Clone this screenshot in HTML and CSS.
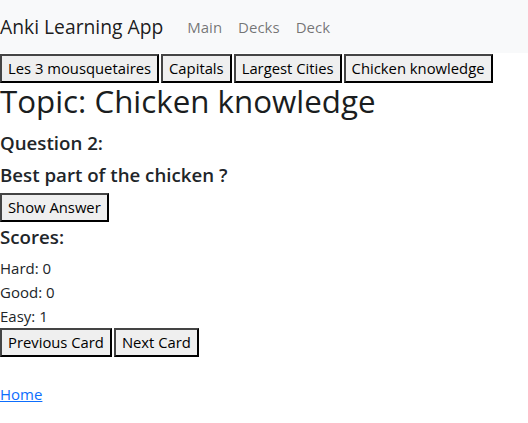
FILE: index.html
```html
<!DOCTYPE html>
<html lang="en">
<head>
<meta charset="utf-8">
<title>Anki Learning App</title>
<link rel="stylesheet" href="styles.css">
</head>
<body>
<nav class="navbar">
  <span class="brand">Anki Learning App</span>
  <ul class="nav-links">
    <li><a class="nav-link" href="#">Main</a></li>
    <li><a class="nav-link" href="#">Decks</a></li>
    <li><a class="nav-link" href="#">Deck</a></li>
  </ul>
</nav>
<div class="decks">
  <button class="btn">Les 3 mousquetaires</button>
  <button class="btn">Capitals</button>
  <button class="btn">Largest Cities</button>
  <button class="btn">Chicken knowledge</button>
</div>
<h1 class="topic">Topic: Chicken knowledge</h1>
<h5 class="sub q-num">Question 2:</h5>
<h5 class="sub q-text">Best part of the chicken ?</h5>
<div class="row"><button class="btn">Show Answer</button></div>
<h5 class="sub scores">Scores:</h5>
<p class="score">Hard: 0</p>
<p class="score">Good: 0</p>
<p class="score">Easy: 1</p>
<div class="row"><button class="btn">Previous Card</button><button class="btn">Next Card</button></div>
<a class="home" href="#">Home</a>
</body>
</html>
```
FILE: styles.css
```css
* { box-sizing: border-box; }
body {
  margin: 0;
  font-family: "Open Sans", "Noto Sans", sans-serif;
  font-size: 15px;
  line-height: 24px;
  color: #212529;
  background: #fff;
}
.navbar {
  display: flex;
  align-items: center;
  height: 53px;
  background: #f8f9fa;
}
.brand {
  font-size: 19.3px;
  line-height: 30px;
  margin-right: 16px;
  color: rgba(0,0,0,0.9);
}
.nav-links {
  display: flex;
  list-style: none;
  margin: 0;
  padding: 0;
}
.nav-link {
  display: block;
  padding: 8px 8px;
  color: rgba(0,0,0,0.55);
  text-decoration: none;
}
.decks {
  display: flex;
  gap: 2px;
  margin-top: 1px;
}
.row { display: flex; gap: 2px; }
.btn {
  font-family: inherit;
  font-size: 14.8px;
  line-height: 23px;
  padding: 1px 6px;
  margin: 0;
  background: #efefef;
  color: #000;
  border: 2px solid;
  border-color: #444 #000 #000 #444;
  border-radius: 0;
}
.topic {
  margin: 0;
  font-size: 31.3px;
  font-weight: 500;
  line-height: 36px;
  color: #1a1d20;
}
.sub {
  margin: 0;
  font-size: 18.7px;
  font-weight: 600;
  line-height: 24px;
}
.q-num { margin-top: 12px; }
.q-text { margin-top: 8px; margin-bottom: 6px; }
.scores { margin-top: 3px; }
.score { margin: 0; line-height: 24px; }
.score:first-of-type { margin-top: 7px; }
.home {
  display: inline-block;
  margin-top: 25px;
  color: #0d6efd;
  text-decoration: underline;
}
```
